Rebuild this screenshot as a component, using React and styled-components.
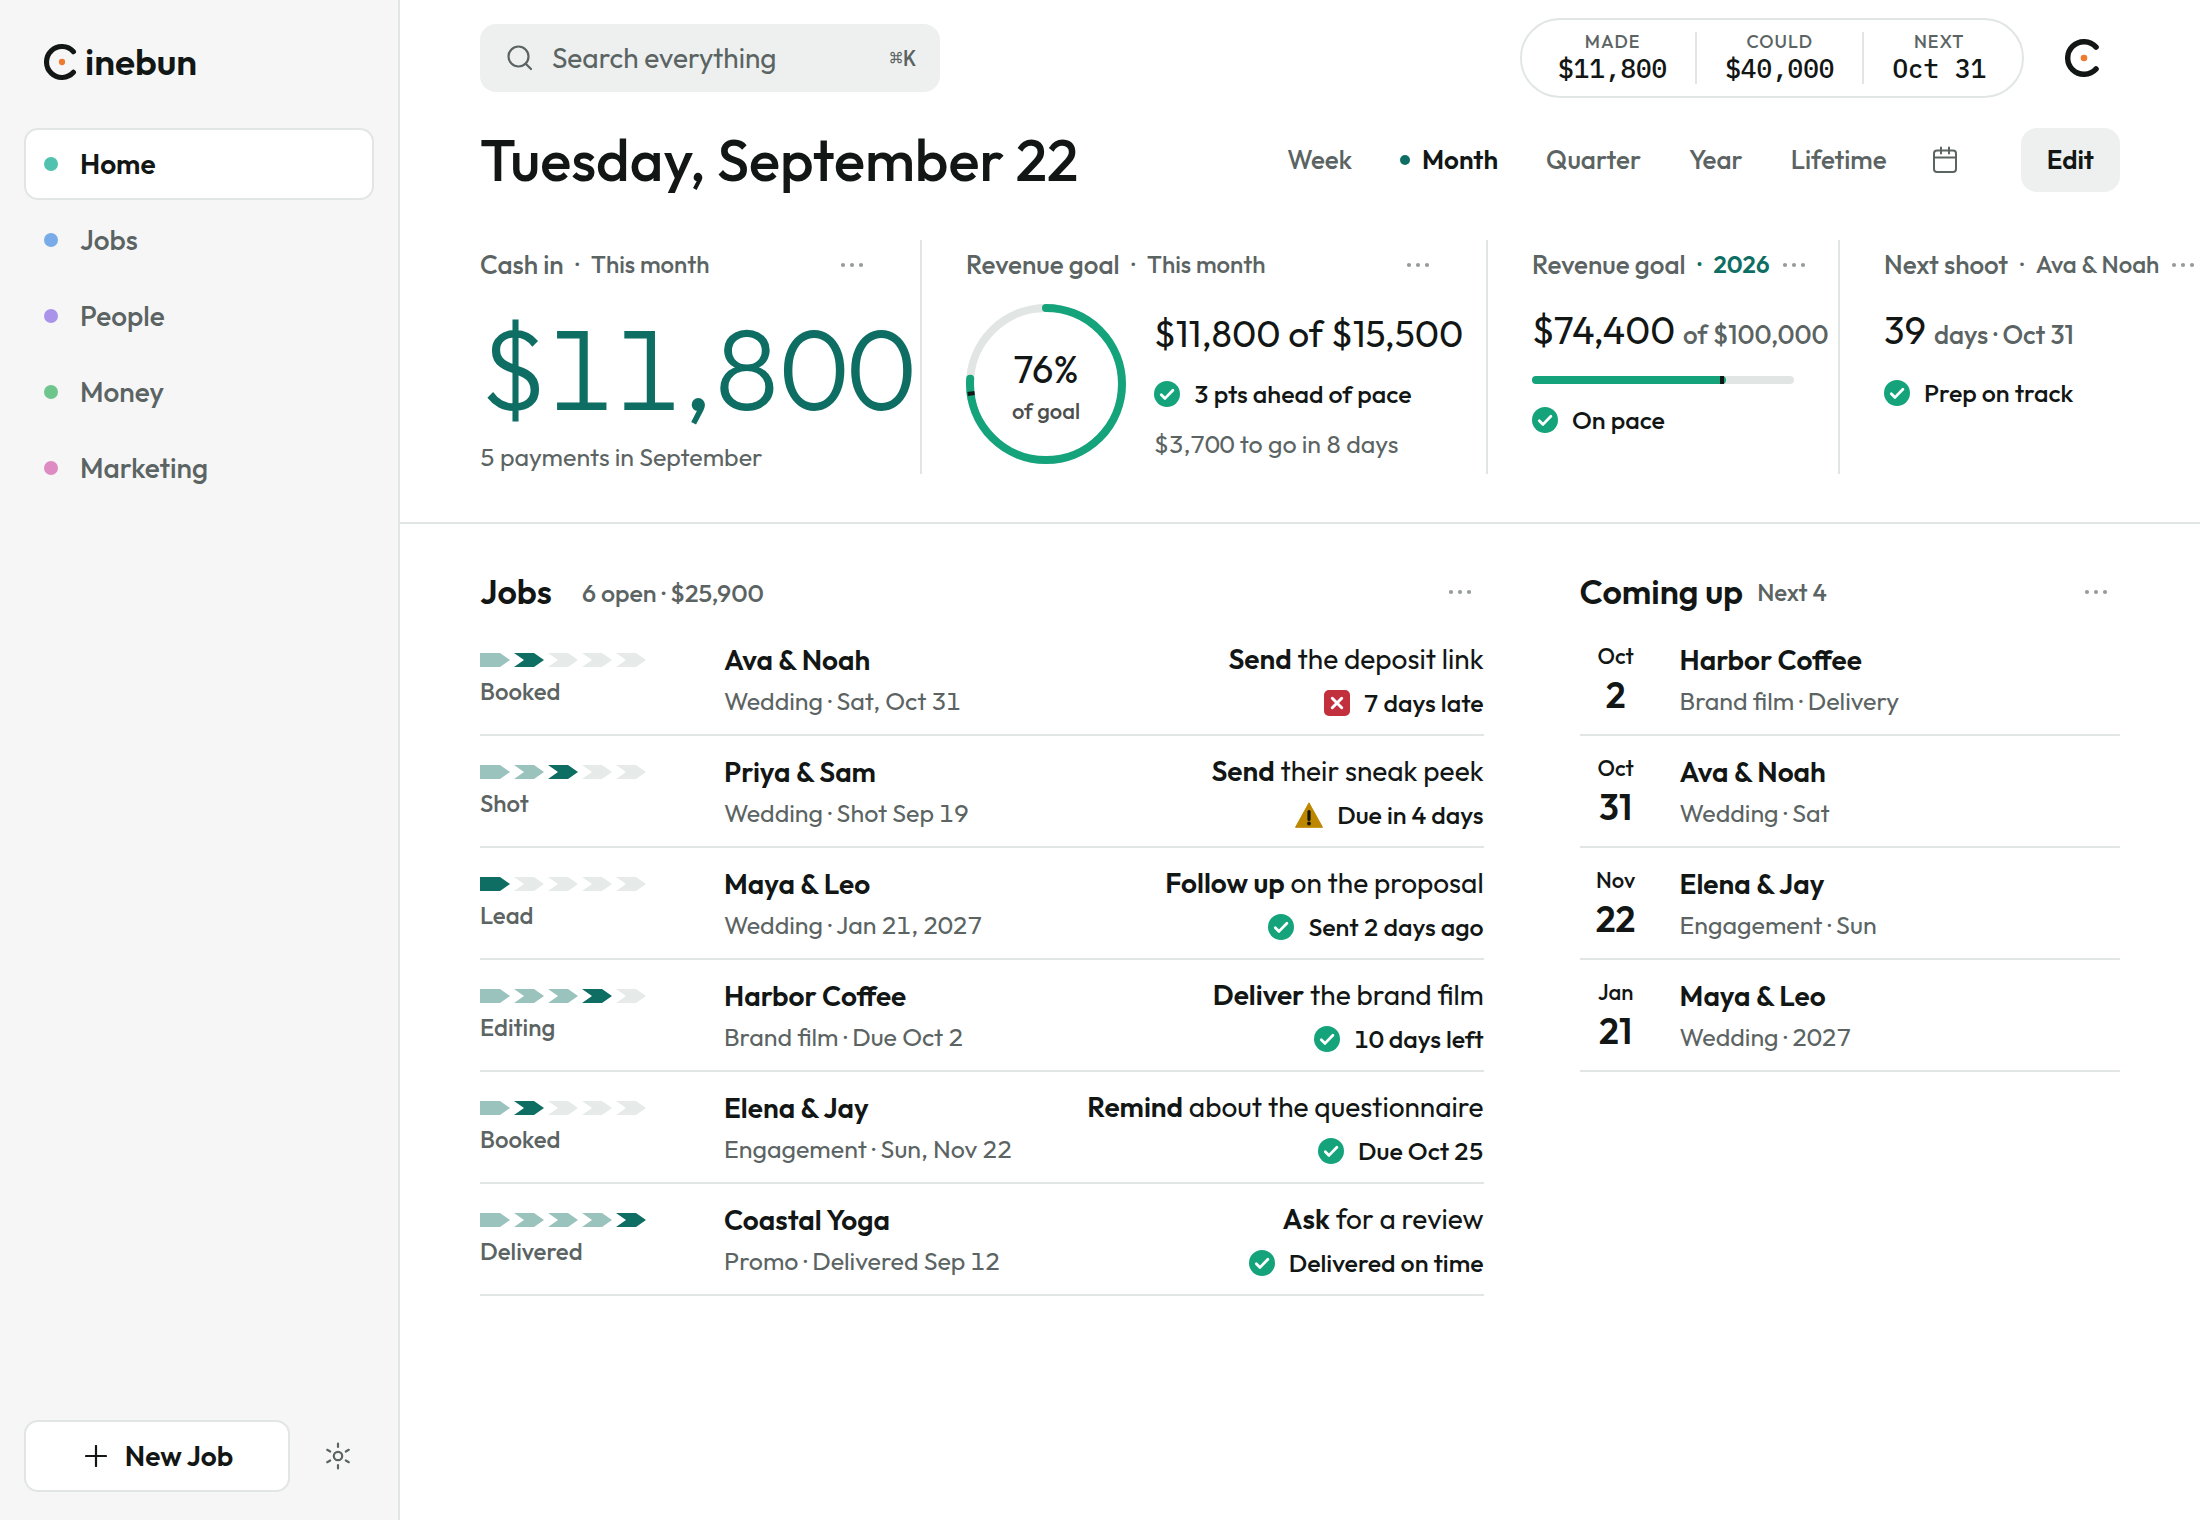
import React, { useState } from "react";
import styled, { createGlobalStyle, css } from "styled-components";

const colors = {
  ink: "#121615",
  muted: "#5b6463",
  faint: "#969c9b",
  line: "#e1e6e5",
  soft: "#eef0f0",
  side: "#f6f6f6",
  teal: "#0f6e63",
  tealSoft: "#9ac3bd",
  green: "#14a37a",
  red: "#c22f3d",
  amber: "#bd8700",
};

const GlobalStyle = createGlobalStyle`
  *, *::before, *::after {
    box-sizing: border-box;
  }
  body {
    margin: 0;
    background: #fff;
    color: ${colors.ink};
    font-family: Outfit, Lato, "Open Sans", sans-serif;
    font-size: 26px;
    line-height: 32px;
  }
  h1, h2, h3, p, ul, ol {
    margin: 0;
    padding: 0;
  }
  ul, ol {
    list-style: none;
  }
  a {
    color: inherit;
    text-decoration: none;
  }
  button, input {
    font: inherit;
    color: inherit;
    border: 0;
    background: none;
    padding: 0;
    cursor: pointer;
  }
  svg {
    display: block;
    flex: none;
  }
`;

const Shell = styled.div`
  display: flex;
  min-height: 100vh;
  overflow: hidden;
`;

/* sidebar */

const Sidebar = styled.aside`
  display: flex;
  flex-direction: column;
  flex: none;
  width: 400px;
  padding: 36px 24px 28px;
  background: ${colors.side};
  border-right: 2px solid ${colors.line};
`;

const Brand = styled.a`
  display: flex;
  align-items: center;
  gap: 5px;
  height: 52px;
  padding-left: 20px;
  margin-bottom: 40px;
  font-size: 37px;
  line-height: 40px;
  font-weight: 600;
`;

const Nav = styled.nav`
  display: flex;
  flex-direction: column;
  gap: 4px;
  flex: 1;
`;

const NavLink = styled.a`
  display: flex;
  align-items: center;
  gap: 22px;
  height: 72px;
  padding: 0 18px;
  border: 2px solid transparent;
  border-radius: 14px;
  font-size: 28px;
  font-weight: 500;
  color: ${colors.muted};
  ${(p) =>
    p.$active &&
    css`
      background: #fff;
      border-color: ${colors.line};
      color: ${colors.ink};
      font-weight: 600;
    `}
`;

const NavDot = styled.span`
  width: 14px;
  height: 14px;
  border-radius: 50%;
  background: ${(p) => p.$color};
`;

const SideFooter = styled.div`
  display: flex;
  align-items: center;
  gap: 24px;
`;

const NewJob = styled.button`
  display: flex;
  align-items: center;
  justify-content: center;
  gap: 18px;
  flex: 1;
  height: 72px;
  padding-left: 4px;
  border: 2px solid ${colors.line};
  border-radius: 14px;
  background: #fff;
  font-size: 28px;
  font-weight: 600;
`;

const IconButton = styled.button`
  display: flex;
  align-items: center;
  justify-content: center;
  width: 48px;
  height: 48px;
  color: ${colors.muted};
`;

const SideIconButton = styled(IconButton)`
  margin-right: 12px;
`;

/* header */

const Main = styled.main`
  flex: 1;
  min-width: 0;
`;

const TopBar = styled.header`
  display: flex;
  align-items: center;
  justify-content: space-between;
  padding: 18px 80px 0;
`;

const SearchBox = styled.label`
  display: flex;
  align-items: center;
  gap: 18px;
  width: 460px;
  height: 68px;
  padding: 0 24px 0 26px;
  border-radius: 16px;
  background: ${colors.soft};
  color: ${colors.muted};
`;

const SearchInput = styled.input`
  flex: 1;
  min-width: 0;
  font-size: 28px;
  outline: 0;
  &::placeholder {
    color: ${colors.muted};
    opacity: 1;
  }
`;

const Shortcut = styled.kbd`
  font-family: "IBM Plex Mono", "Liberation Mono", monospace;
  font-size: 22px;
  line-height: 24px;
  font-weight: 500;
`;

const TopRight = styled.div`
  display: flex;
  align-items: center;
  gap: 24px;
`;

const StatPill = styled.ul`
  display: flex;
  align-items: center;
  height: 80px;
  padding: 0 8px;
  border: 2px solid ${colors.line};
  border-radius: 40px;
`;

const Stat = styled.li`
  display: flex;
  flex-direction: column;
  align-items: center;
  justify-content: center;
  height: 52px;
  padding: 0 28px 4px;
  & + & {
    border-left: 2px solid ${colors.line};
  }
`;

const StatLabel = styled.span`
  font-size: 18px;
  line-height: 24px;
  font-weight: 500;
  letter-spacing: 1px;
  text-transform: uppercase;
  color: ${colors.muted};
`;

const StatValue = styled.span`
  font-family: "IBM Plex Mono", "Liberation Mono", monospace;
  font-size: 26px;
  line-height: 28px;
  font-weight: 500;
`;

const Avatar = styled.button`
  display: flex;
  align-items: center;
  justify-content: center;
  width: 72px;
  height: 72px;
`;

const TitleBar = styled.div`
  display: flex;
  align-items: center;
  justify-content: space-between;
  padding: 24px 80px 0;
`;

const Title = styled.h1`
  font-size: 58px;
  line-height: 76px;
  font-weight: 500;
  white-space: nowrap;
`;

const Ranges = styled.div`
  display: flex;
  align-items: center;
  gap: 48px;
`;

const Range = styled.button`
  display: flex;
  align-items: center;
  gap: 12px;
  font-size: 26px;
  line-height: 32px;
  font-weight: ${(p) => (p.$active ? 600 : 500)};
  color: ${(p) => (p.$active ? colors.ink : colors.muted)};
`;

const RangeDot = styled.span`
  width: 10px;
  height: 10px;
  border-radius: 50%;
  background: ${colors.teal};
`;

const PickDates = styled(IconButton)`
  margin: 0 -12px 0 -14px;
`;

const EditButton = styled.button`
  height: 64px;
  padding: 0 26px;
  margin-left: 16px;
  border-radius: 16px;
  background: ${colors.soft};
  font-size: 26px;
  font-weight: 600;
`;

/* metric cards */

const Metrics = styled.section`
  display: grid;
  grid-template-columns:
    minmax(0, 442fr) minmax(0, 566fr)
    minmax(0, 352fr) minmax(0, 360fr);
  margin-top: 42px;
  padding: 0 0 48px 80px;
  border-bottom: 2px solid ${colors.line};
`;

const Card = styled.article`
  min-height: 234px;
  padding: 0 44px;
  border-right: 2px solid ${colors.line};
  white-space: nowrap;
  &:first-child {
    padding-left: 0;
  }
  &:last-child {
    border-right: 0;
  }
`;

const CardHead = styled.header`
  display: flex;
  align-items: center;
  height: 50px;
`;

const CardTitle = styled.h3`
  font-size: 26px;
  line-height: 32px;
  font-weight: 500;
  color: ${colors.muted};
`;

const CardScope = styled.span`
  flex: 1 0 auto;
  display: flex;
  gap: 12px;
  margin-left: 12px;
  padding-bottom: 2px;
  font-size: 24px;
  line-height: 32px;
  font-weight: ${(p) => (p.$accent ? 600 : 500)};
  color: ${(p) => (p.$accent ? colors.teal : colors.muted)};
`;

const MoreButton = styled(IconButton)`
  flex: none;
  color: ${colors.faint};
`;

const HugeNumber = styled.p`
  margin-top: 12px;
  font-size: 114px;
  line-height: 132px;
  font-weight: 300;
  font-variant-numeric: tabular-nums;
  color: ${colors.teal};
`;

const Note = styled.p`
  margin-top: ${(p) => p.$top || 0}px;
  font-size: 25px;
  line-height: 32px;
  font-variant-numeric: tabular-nums;
  color: ${colors.muted};
`;

const GoalBody = styled.div`
  display: flex;
  align-items: center;
  gap: 28px;
  padding-top: 14px;
`;

const GoalText = styled.div`
  padding-top: 4px;
`;

const RingWrap = styled.div`
  position: relative;
  flex: none;
  width: 160px;
  height: 160px;
`;

const RingText = styled.div`
  position: absolute;
  inset: 0;
  display: flex;
  flex-direction: column;
  align-items: center;
  justify-content: center;
  gap: 4px;
  padding-top: 6px;
  font-size: 22px;
  line-height: 32px;
  font-weight: 500;
  color: #4c4f4e;
`;

const RingValue = styled.strong`
  font-size: 38px;
  line-height: 44px;
  font-weight: 400;
  color: ${colors.ink};
`;

const Figure = styled.p`
  font-size: ${(p) => (p.$small ? 37 : 38)}px;
  line-height: 44px;
  margin-top: ${(p) => p.$top || 0}px;
`;

const FigureUnit = styled.span`
  margin-left: 8px;
  font-size: 26px;
  font-weight: 500;
  color: ${colors.muted};
`;

const StatusLine = styled.p`
  display: flex;
  align-items: center;
  gap: 14px;
  margin-top: ${(p) => p.$top || 0}px;
  justify-content: ${(p) => (p.$end ? "flex-end" : "flex-start")};
  font-size: 25px;
  line-height: 32px;
  font-weight: 500;
  font-variant-numeric: tabular-nums;
`;

const Track = styled.div`
  display: flex;
  height: 8px;
  margin-top: 19px;
  border-radius: 4px;
  background: ${colors.line};
`;

const TrackFill = styled.div`
  display: flex;
  justify-content: flex-end;
  padding-right: 2px;
  border-radius: 4px;
  background: ${colors.green};
  &::after {
    content: "";
    width: 4px;
    background: ${colors.ink};
  }
`;

/* lists */

const Columns = styled.div`
  display: grid;
  grid-template-columns: minmax(0, 65fr) minmax(0, 35fr);
  gap: 96px;
  padding: 44px 80px 60px;
`;

const SectionHead = styled.header`
  display: flex;
  align-items: center;
  height: 48px;
  margin-bottom: 8px;
`;

const SectionTitle = styled.h2`
  font-size: 34px;
  line-height: 44px;
  font-weight: 600;
`;

const SectionMeta = styled.span`
  flex: 1;
  margin-left: ${(p) => (p.$wide ? 30 : 14)}px;
  padding-top: ${(p) => (p.$wide ? 2 : 0)}px;
  font-size: ${(p) => (p.$wide ? 25 : 24)}px;
  font-weight: 500;
  color: ${colors.muted};
`;

const JobRow = styled.li`
  display: grid;
  grid-template-columns: 244px minmax(0, 1fr) auto;
  height: 112px;
  padding-top: 18px;
  border-bottom: 2px solid ${colors.line};
`;

const Stage = styled.div`
  padding-top: 11px;
  font-size: 24px;
  line-height: 32px;
  font-weight: 500;
  color: ${colors.muted};
  svg {
    margin-bottom: 8px;
  }
`;

const Name = styled.a`
  display: block;
  font-size: 28px;
  line-height: 36px;
  margin-bottom: 7px;
  font-weight: 600;
`;

const Action = styled.a`
  display: block;
  text-align: right;
  font-size: 28px;
  line-height: 34px;
  margin-bottom: 11px;
  b {
    font-weight: 600;
  }
`;

const EventRow = styled.li`
  display: grid;
  grid-template-columns: 72px minmax(0, 1fr);
  column-gap: 28px;
  height: 112px;
  padding-top: 18px;
  border-bottom: 2px solid ${colors.line};
`;

const DateBox = styled.time`
  display: flex;
  flex-direction: column;
  align-items: center;
  gap: 3px;
  font-size: 22px;
  line-height: 28px;
  font-weight: 500;
  b {
    font-size: 36px;
    line-height: 44px;
    font-weight: 600;
  }
`;

const LogoMark = ({ size = 38 }) => (
  <svg width={size} height={size} viewBox="0 0 38 38" fill="none" aria-hidden="true">
    <path d="M31.100 8.100A16.300 16.300 0 1 0 31.100 29.900" stroke={colors.ink} strokeWidth="5.400" strokeLinecap="round" />
    <circle cx="19" cy="19" r="3.300" fill="#ee7a2f" />
  </svg>
);

const SearchIcon = () => (
  <svg width="28" height="28" viewBox="0 0 28 28" fill="none" stroke="currentColor" strokeWidth="2.200" strokeLinecap="round" aria-hidden="true">
    <circle cx="12.500" cy="12.500" r="10" />
    <path d="M20 20l5 5" />
  </svg>
);

const CalendarIcon = () => (
  <svg width="26" height="28" viewBox="0 0 26 28" fill="none" stroke="currentColor" strokeWidth="2" strokeLinecap="round" aria-hidden="true">
    <rect x="2" y="4.500" width="22" height="21.500" rx="3" />
    <path d="M2 11.500h22M9 1.500v6M17 1.500v6" />
  </svg>
);

const PlusIcon = () => (
  <svg width="22" height="22" viewBox="0 0 22 22" fill="none" stroke="currentColor" strokeWidth="2.200" strokeLinecap="round" aria-hidden="true">
    <path d="M11 1v20M1 11h20" />
  </svg>
);

const SunIcon = () => (
  <svg width="28" height="28" viewBox="0 0 28 28" fill="none" stroke="currentColor" strokeWidth="2.200" strokeLinecap="round" aria-hidden="true">
    <circle cx="14" cy="14" r="4.200" />
    <path d="M14 1.500v3.500M14 23v3.500M3.200 7.800l3 1.700M21.800 18.500l3 1.700M3.200 20.200l3-1.700M21.800 9.500l3-1.700" />
  </svg>
);

const DotsIcon = () => (
  <svg width="24" height="6" viewBox="0 0 24 6" fill="currentColor" aria-hidden="true">
    <circle cx="3" cy="3" r="2.100" />
    <circle cx="12" cy="3" r="2.100" />
    <circle cx="21" cy="3" r="2.100" />
  </svg>
);

const StatusIcon = ({ kind }) => {
  if (kind === "late") {
    return (
      <svg width="26" height="26" viewBox="0 0 26 26" aria-hidden="true">
        <rect width="26" height="26" rx="5" fill={colors.red} />
        <path d="M8.300 8.300l9.400 9.400M17.700 8.300l-9.400 9.400" stroke="#fff" strokeWidth="3" strokeLinecap="round" />
      </svg>
    );
  }
  if (kind === "soon") {
    return (
      <svg width="28" height="26" viewBox="0 0 28 26" aria-hidden="true">
        <path d="M14 .8L27.500 25.300H.5z" fill={colors.amber} stroke={colors.amber} strokeLinejoin="round" />
        <path d="M14 9.500v8" stroke={colors.ink} strokeWidth="3.200" strokeLinecap="round" />
        <circle cx="14" cy="21.500" r="1.900" fill={colors.ink} />
      </svg>
    );
  }
  return (
    <svg width="26" height="26" viewBox="0 0 26 26" aria-hidden="true">
      <circle cx="13" cy="13" r="13" fill={colors.green} />
      <path d="M7.300 13.700l3.700 3.700 7.900-8.200" fill="none" stroke="#fff" strokeWidth="2.800" strokeLinecap="round" strokeLinejoin="round" />
    </svg>
  );
};

const More = ({ label }) => (
  <MoreButton type="button" aria-label={`${label} options`}>
    <DotsIcon />
  </MoreButton>
);

const Status = ({ kind, top, end, children }) => (
  <StatusLine $top={top} $end={end}>
    <StatusIcon kind={kind} />
    {children}
  </StatusLine>
);

const Ring = ({ value, pace }) => {
  const r = 76;
  const length = 2 * Math.PI * r;
  return (
    <RingWrap>
      <svg width="160" height="160" viewBox="0 0 160 160" fill="none" aria-hidden="true">
        <circle cx="80" cy="80" r={r} stroke={colors.line} strokeWidth="8" />
        <circle
          cx="80"
          cy="80"
          r={r}
          stroke={colors.green}
          strokeWidth="8"
          strokeLinecap="round"
          strokeDasharray={`${(length * value) / 100} ${length}`}
          transform="rotate(-90 80 80)"
        />
        <path d="M80 1v7" stroke={colors.ink} strokeWidth="4" transform={`rotate(${pace * 3.6} 80 80)`} />
      </svg>
      <RingText>
        <RingValue>{value}%</RingValue>
        of goal
      </RingText>
    </RingWrap>
  );
};

const stages = ["Lead", "Booked", "Shot", "Editing", "Delivered"];

const StageBar = ({ stage }) => {
  const current = stages.indexOf(stage);
  return (
    <svg width="166" height="14" viewBox="0 0 166 14" aria-hidden="true">
      {stages.map((name, i) => {
        const x = i * 34;
        const fill = i === current ? colors.teal : i < current ? colors.tealSoft : "#e6eae9";
        const notch = i === 0 ? "" : `L${x + 10} 7`;
        return <path key={name} d={`M${x} 0H${x + 20}L${x + 30} 7L${x + 20} 14H${x}${notch}Z`} fill={fill} />;
      })}
    </svg>
  );
};

const CardHeader = ({ title, scope, accent }) => (
  <CardHead>
    <CardTitle>{title}</CardTitle>
    <CardScope $accent={accent}>
      <span>·</span>
      <span>{scope}</span>
    </CardScope>
    <More label={title} />
  </CardHead>
);

const navItems = [
  { label: "Home", color: "#52c2b0" },
  { label: "Jobs", color: "#78abe8" },
  { label: "People", color: "#a994e9" },
  { label: "Money", color: "#6fc68d" },
  { label: "Marketing", color: "#dd8bc2" },
];

const stats = [
  { label: "Made", value: "$11,800" },
  { label: "Could", value: "$40,000" },
  { label: "Next", value: "Oct 31" },
];

const ranges = ["Week", "Month", "Quarter", "Year", "Lifetime"];

const jobs = [
  { stage: "Booked", name: "Ava & Noah", detail: "Wedding · Sat, Oct 31", verb: "Send", rest: "the deposit link", kind: "late", status: "7 days late" },
  { stage: "Shot", name: "Priya & Sam", detail: "Wedding · Shot Sep 19", verb: "Send", rest: "their sneak peek", kind: "soon", status: "Due in 4 days" },
  { stage: "Lead", name: "Maya & Leo", detail: "Wedding · Jan 21, 2027", verb: "Follow up", rest: "on the proposal", kind: "ok", status: "Sent 2 days ago" },
  { stage: "Editing", name: "Harbor Coffee", detail: "Brand film · Due Oct 2", verb: "Deliver", rest: "the brand film", kind: "ok", status: "10 days left" },
  { stage: "Booked", name: "Elena & Jay", detail: "Engagement · Sun, Nov 22", verb: "Remind", rest: "about the questionnaire", kind: "ok", status: "Due Oct 25" },
  { stage: "Delivered", name: "Coastal Yoga", detail: "Promo · Delivered Sep 12", verb: "Ask", rest: "for a review", kind: "ok", status: "Delivered on time" },
];

const events = [
  { month: "Oct", day: "2", name: "Harbor Coffee", detail: "Brand film · Delivery" },
  { month: "Oct", day: "31", name: "Ava & Noah", detail: "Wedding · Sat" },
  { month: "Nov", day: "22", name: "Elena & Jay", detail: "Engagement · Sun" },
  { month: "Jan", day: "21", name: "Maya & Leo", detail: "Wedding · 2027" },
];

const App = () => {
  const [range, setRange] = useState("Month");
  const yearGoal = 74;

  return (
    <>
      <GlobalStyle />
      <Shell>
        <Sidebar>
          <Brand href="#home">
            <LogoMark size={36} />
            inebun
          </Brand>
          <Nav>
            {navItems.map((item, i) => (
              <NavLink key={item.label} href={`#${item.label.toLowerCase()}`} $active={i === 0}>
                <NavDot $color={item.color} />
                {item.label}
              </NavLink>
            ))}
          </Nav>
          <SideFooter>
            <NewJob type="button">
              <PlusIcon />
              New Job
            </NewJob>
            <SideIconButton type="button" aria-label="Theme">
              <SunIcon />
            </SideIconButton>
          </SideFooter>
        </Sidebar>

        <Main>
          <TopBar>
            <SearchBox>
              <SearchIcon />
              <SearchInput type="text" aria-label="Search everything" placeholder="Search everything" />
              <Shortcut>⌘K</Shortcut>
            </SearchBox>
            <TopRight>
              <StatPill>
                {stats.map((s) => (
                  <Stat key={s.label}>
                    <StatLabel>{s.label}</StatLabel>
                    <StatValue>{s.value}</StatValue>
                  </Stat>
                ))}
              </StatPill>
              <Avatar type="button" aria-label="Account">
                <LogoMark />
              </Avatar>
            </TopRight>
          </TopBar>

          <TitleBar>
            <Title>Tuesday, September 22</Title>
            <Ranges>
              {ranges.map((r) => (
                <Range key={r} type="button" $active={r === range} onClick={() => setRange(r)}>
                  {r === range && <RangeDot />}
                  {r}
                </Range>
              ))}
              <PickDates type="button" aria-label="Pick dates">
                <CalendarIcon />
              </PickDates>
              <EditButton type="button">Edit</EditButton>
            </Ranges>
          </TitleBar>

          <Metrics>
            <Card>
              <CardHeader title="Cash in" scope="This month" />
              <HugeNumber>$11,800</HugeNumber>
              <Note $top={7}>5 payments in September</Note>
            </Card>
            <Card>
              <CardHeader title="Revenue goal" scope="This month" />
              <GoalBody>
                <Ring value={76} pace={73} />
                <GoalText>
                  <Figure $small>$11,800 of $15,500</Figure>
                  <Status kind="ok" top={22}>3 pts ahead of pace</Status>
                  <Note $top={18}>$3,700 to go in 8 days</Note>
                </GoalText>
              </GoalBody>
            </Card>
            <Card>
              <CardHeader title="Revenue goal" scope="2026" accent />
              <Figure $top={18}>
                $74,400
                <FigureUnit>of $100,000</FigureUnit>
              </Figure>
              <Track>
                <TrackFill style={{ width: `${yearGoal}%` }} />
              </Track>
              <Status kind="ok" top={20}>On pace</Status>
            </Card>
            <Card>
              <CardHeader title="Next shoot" scope="Ava & Noah" />
              <Figure $top={18}>
                39
                <FigureUnit>days · Oct 31</FigureUnit>
              </Figure>
              <Status kind="ok" top={20}>Prep on track</Status>
            </Card>
          </Metrics>

          <Columns>
            <section>
              <SectionHead>
                <SectionTitle>Jobs</SectionTitle>
                <SectionMeta $wide>6 open · $25,900</SectionMeta>
                <More label="Jobs" />
              </SectionHead>
              <ul>
                {jobs.map((job) => (
                  <JobRow key={job.name}>
                    <Stage>
                      <StageBar stage={job.stage} />
                      {job.stage}
                    </Stage>
                    <div>
                      <Name href="#job">{job.name}</Name>
                      <Note>{job.detail}</Note>
                    </div>
                    <div>
                      <Action href="#action">
                        <b>{job.verb}</b> {job.rest}
                      </Action>
                      <Status kind={job.kind} end>{job.status}</Status>
                    </div>
                  </JobRow>
                ))}
              </ul>
            </section>
            <section>
              <SectionHead>
                <SectionTitle>Coming up</SectionTitle>
                <SectionMeta>Next 4</SectionMeta>
                <More label="Coming up" />
              </SectionHead>
              <ol>
                {events.map((e) => (
                  <EventRow key={e.name}>
                    <DateBox>
                      {e.month}
                      <b>{e.day}</b>
                    </DateBox>
                    <div>
                      <Name href="#event">{e.name}</Name>
                      <Note>{e.detail}</Note>
                    </div>
                  </EventRow>
                ))}
              </ol>
            </section>
          </Columns>
        </Main>
      </Shell>
    </>
  );
};

export default App;
